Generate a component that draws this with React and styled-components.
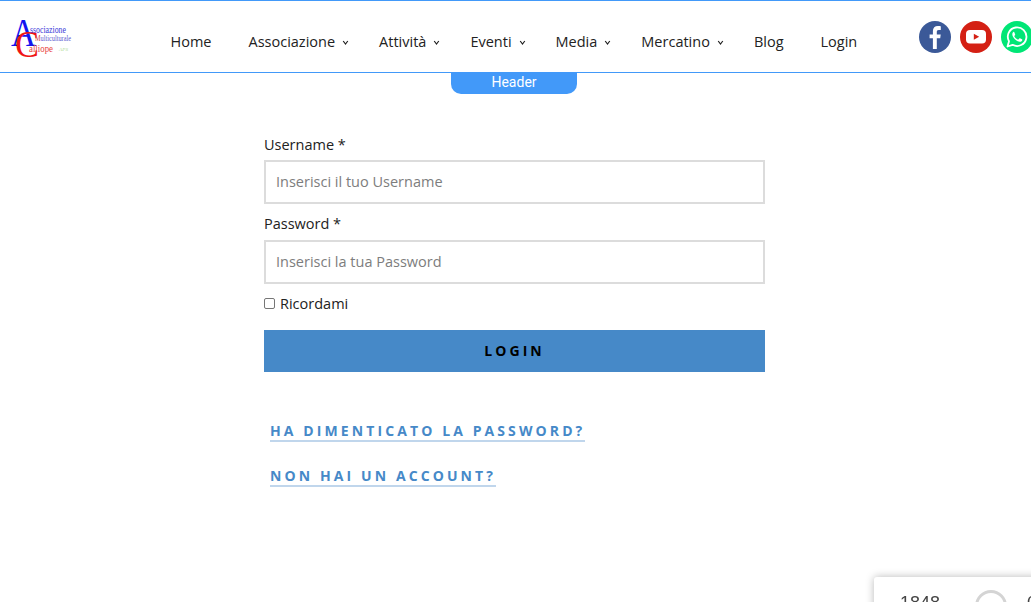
import React from 'react'
import styled, { createGlobalStyle } from 'styled-components'

const GlobalStyle = createGlobalStyle`
    html, body {
        margin: 0;
        height: 100%;
        overflow: hidden;
        background: #fff;
        font-family: "Open Sans", sans-serif;
    }
    * { box-sizing: border-box; }
`

const Header = styled.header`
    position: relative;
    display: flex;
    align-items: center;
    height: 73px;
    width: 1033px;
    border-top: 1px solid #4299f9;
    border-bottom: 1px solid #4299f9;
    padding-left: 8px;
`

const LogoBox = styled.svg`
    width: 66px;
    height: 60px;
    flex: none;
`

const Nav = styled.nav`
    display: flex;
    align-items: center;
    margin-left: 96.5px;
    margin-top: 10px;
`

const NavItem = styled.a`
    display: flex;
    align-items: center;
    padding-right: ${props => (props.$last ? '0' : props.$sub ? '30px' : '37px')};
    font-size: 14.5px;
    color: #222;
    white-space: nowrap;
`

const Chevron = styled.svg`
    width: 7px;
    height: 5px;
    margin-left: 7px;
    margin-top: 1px;
`

const Socials = styled.div`
    display: flex;
    gap: 9px;
    margin-left: 62px;
    margin-top: 1px;
`

const Social = styled.svg`
    width: 32px;
    height: 32px;
    display: block;
    flex: none;
`

const HeaderTag = styled.div`
    position: absolute;
    left: 451px;
    top: 71px;
    width: 126px;
    height: 22px;
    background: #4299f9;
    border-radius: 0 0 10px 10px;
    color: #fff;
    font-family: Roboto, sans-serif;
    font-size: 14px;
    line-height: 21px;
    text-align: center;
`

const Main = styled.main`
    width: 501px;
    margin: 0 0 0 264px;
    padding-top: 62px;
`

const Label = styled.label`
    display: block;
    font-size: 14.5px;
    line-height: 20px;
    color: #222;
    margin-bottom: ${props => (props.$wide ? '6px' : '5px')};
`

const Input = styled.input`
    display: block;
    width: 100%;
    height: 44px;
    border: 2px solid #dcdcdc;
    padding: 0 10px 2px;
    margin-bottom: 10px;
    font-family: "Open Sans", sans-serif;
    font-size: 14.5px;
    background: #fff;
    outline: none;

    &::placeholder {
        color: #7d7d7d;
        opacity: 1;
    }
`

const Remember = styled.div`
    display: flex;
    align-items: center;
    height: 20px;
    margin-top: -1px;
    font-size: 14.5px;
    color: #222;
    gap: 5px;
`

const Check = styled.span`
    width: 11px;
    height: 11px;
    border: 1px solid #767676;
    border-radius: 2px;
    background: #fff;
`

const LoginButton = styled.button`
    display: block;
    width: 100%;
    height: 42px;
    margin-top: 17px;
    padding: 0 0 2px;
    border: 0;
    background: #4689c8;
    color: #000;
    font-family: "Open Sans", sans-serif;
    font-size: 14px;
    font-weight: 700;
    letter-spacing: 3.1px;
`

const Links = styled.div`
    display: flex;
    flex-direction: column;
    align-items: flex-start;
    gap: 24px;
    margin-top: 49px;
    margin-left: 6px;
`

const TextLink = styled.a`
    font-size: 14px;
    font-weight: 700;
    line-height: 20px;
    letter-spacing: 3.1px;
    color: #4689c8;
    border-bottom: 2px solid #c0d6ec;
    height: 21px;
`

const FloatCard = styled.div`
    position: fixed;
    left: 874px;
    top: 577px;
    width: 190px;
    height: 60px;
    background: #fff;
    border-radius: 3px 0 0 0;
    box-shadow: 0 0 8px rgba(0, 0, 0, 0.28);
    display: flex;
    align-items: flex-start;
    padding: 16px 0 0 26px;
    font-family: "Liberation Sans", sans-serif;
    font-size: 18px;
    line-height: 20px;
    color: #444;
`

const Ring = styled.span`
    width: 32px;
    height: 32px;
    flex: none;
    margin: -3px 0 0 35px;
    border: 3px solid #d4d4d4;
    border-radius: 50%;
`

const CardCount = styled.span`
    margin-left: 20px;
`

const ChevronIcon = () => (
    <Chevron viewBox="0 0 7 5">
        <path d="M1.200 1l2.300 3 2.300-3" fill="none" stroke="#222" strokeWidth="1.200" />
    </Chevron>
)

const items = [
    { label: 'Home' },
    { label: 'Associazione', sub: true },
    { label: 'Attività', sub: true },
    { label: 'Eventi', sub: true },
    { label: 'Media', sub: true },
    { label: 'Mercatino', sub: true },
    { label: 'Blog' },
    { label: 'Login', last: true },
]

const App = () => (
    <>
        <GlobalStyle />
        <Header>
            <LogoBox viewBox="0 0 66 60">
                <text x="3" y="38.500" fontFamily="Liberation Serif" fontSize="39" fill="#1414f0" textLength="25" lengthAdjust="spacingAndGlyphs">A</text>
                <text x="7" y="50" fontFamily="Liberation Serif" fontSize="38" fill="#f01414" textLength="24" lengthAdjust="spacingAndGlyphs">C</text>
                <text x="22" y="25.500" fontFamily="Liberation Serif" fontSize="9.500" fill="#3a3ad8" textLength="36" lengthAdjust="spacingAndGlyphs">ssociazione</text>
                <text x="27" y="34" fontFamily="Liberation Serif" fontSize="8" fill="#5a5ad0" textLength="36" lengthAdjust="spacingAndGlyphs"><tspan fill="#d04040">M</tspan>ulticulturale</text>
                <text x="21" y="45" fontFamily="Liberation Serif" fontSize="10.500" fill="#e83c3c" textLength="24" lengthAdjust="spacingAndGlyphs">alliope</text>
                <text x="51" y="44" fontFamily="Liberation Serif" fontSize="5" fontStyle="italic" fill="#a8d890" textLength="9">APS</text>
            </LogoBox>
            <Nav>
                {items.map(item => (
                    <NavItem key={item.label} $sub={item.sub} $last={item.last}>
                        {item.label}
                        {item.sub && <ChevronIcon />}
                    </NavItem>
                ))}
            </Nav>
            <Socials>
                <Social viewBox="0 0 32 32">
                    <circle cx="16" cy="16" r="16" fill="#3b5998" />
                    <path d="M17.800 28V17.200h3.400l.5-3.800h-3.900V11c0-1.100.4-1.900 1.900-1.900h2.100V5.200c-.4 0-1.600-.2-3-.2-2.900 0-4.900 1.800-4.900 5.100v3.300h-3.300v3.800h3.300V28z" fill="#fff" />
                </Social>
                <Social viewBox="0 0 32 32">
                    <circle cx="16" cy="16" r="16" fill="#d42014" />
                    <rect x="6" y="9" width="20" height="13.500" rx="4" fill="#fff" />
                    <path d="M13.800 12.800l5.400 3-5.400 3z" fill="#d42014" />
                </Social>
                <Social viewBox="0 0 32 32">
                    <circle cx="16" cy="16" r="16" fill="#00e676" />
                    <path d="M6.500 25.500l1.500-5.300a9.300 9.300 0 1 1 3.600 3.600z" fill="none" stroke="#fff" strokeWidth="1.800" strokeLinejoin="round" />
                    <path d="M12.800 10.800c-.5 0-1.500.9-1.500 2.500 0 3 3.800 7 7.300 7.500 1.500.2 2.600-.9 2.700-1.900 0-.4 0-.6-.3-.7l-2-1c-.3-.1-.5 0-.7.200l-.8 1c-.2.200-.4.200-.6.100-1.500-.6-2.800-1.700-3.500-3.100-.1-.2-.1-.4.100-.6l.6-.8c.1-.2.200-.4.100-.6l-.8-2c-.1-.4-.3-.6-.6-.6z" fill="#fff" />
                </Social>
            </Socials>
            <HeaderTag>Header</HeaderTag>
        </Header>
        <Main>
            <Label>Username *</Label>
            <Input placeholder="Inserisci il tuo Username" />
            <Label $wide>Password *</Label>
            <Input placeholder="Inserisci la tua Password" />
            <Remember>
                <Check />
                Ricordami
            </Remember>
            <LoginButton>LOGIN</LoginButton>
            <Links>
                <TextLink>HA DIMENTICATO LA PASSWORD?</TextLink>
                <TextLink>NON HAI UN ACCOUNT?</TextLink>
            </Links>
        </Main>
        <FloatCard>
            1848
            <Ring />
            <CardCount>0</CardCount>
        </FloatCard>
    </>
)

export default App
